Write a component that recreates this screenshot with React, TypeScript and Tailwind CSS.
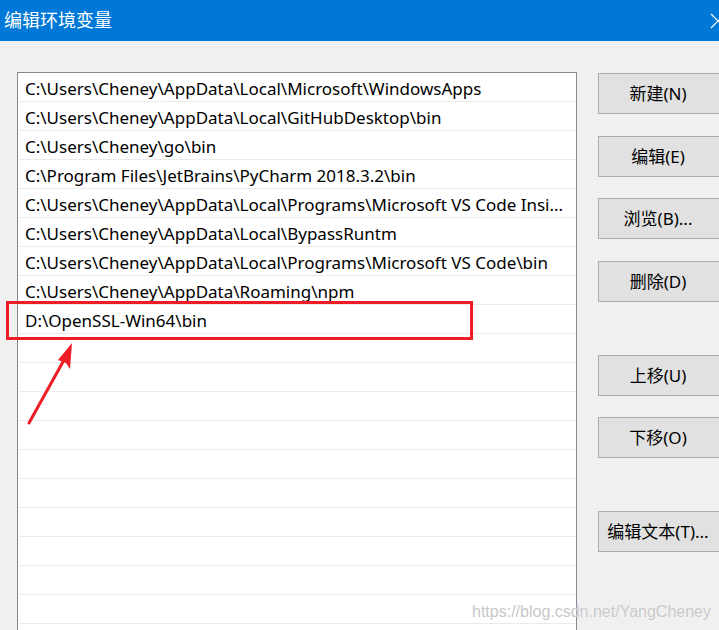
import React from 'react'

const PATHS = [
  'C:\\Users\\Cheney\\AppData\\Local\\Microsoft\\WindowsApps',
  'C:\\Users\\Cheney\\AppData\\Local\\GitHubDesktop\\bin',
  'C:\\Users\\Cheney\\go\\bin',
  'C:\\Program Files\\JetBrains\\PyCharm 2018.3.2\\bin',
  'C:\\Users\\Cheney\\AppData\\Local\\Programs\\Microsoft VS Code Insi...',
  'C:\\Users\\Cheney\\AppData\\Local\\BypassRuntm',
  'C:\\Users\\Cheney\\AppData\\Local\\Programs\\Microsoft VS Code\\bin',
  'C:\\Users\\Cheney\\AppData\\Roaming\\npm',
  'D:\\OpenSSL-Win64\\bin',
]

const BUTTONS = [
  { label: '新建(N)', mt: 'mt-0' },
  { label: '编辑(E)', mt: 'mt-[22px]' },
  { label: '浏览(B)...', mt: 'mt-[21px]' },
  { label: '删除(D)', mt: 'mt-[22px]' },
  { label: '上移(U)', mt: 'mt-[53px]' },
  { label: '下移(O)', mt: 'mt-[21px]' },
  { label: '编辑文本(T)...', mt: 'mt-[53px]' },
]

const FONT = "font-['Noto_Sans','Noto_Sans_CJK_SC',sans-serif]"

export default function App() {
  const rows = [...PATHS, ...Array(12).fill('')]

  return (
    <div className={`relative h-[630px] w-[719px] overflow-hidden bg-[#f0f0f0] ${FONT}`}>
      {/* Title bar */}
      <div className="flex h-[41px] items-center justify-between bg-[#0078d7] pl-[4px] text-white">
        <span className="text-[18px]">编辑环境变量</span>
        <svg className="mr-[-7px] h-[16px] w-[16px]" viewBox="0 0 16 16" fill="none" stroke="white" strokeWidth="1.2">
          <path d="M1 1 L15 15 M15 1 L1 15" />
        </svg>
      </div>

      <div className="flex pl-[17px] pt-[31px]">
        {/* List */}
        <div className="h-[600px] w-[560px] shrink-0 overflow-hidden border-l border-t border-r border-[#828790] bg-white">
          {rows.map((p, i) => (
            <div
              key={i}
              className="ml-[1px] flex h-[29px] items-center overflow-hidden whitespace-nowrap border-b border-[#ebebeb] pl-[6px] pt-[2px] text-[17px] leading-none text-black"
            >
              {p}
            </div>
          ))}
        </div>

        {/* Buttons */}
        <div className="ml-[21px] flex flex-col pt-[1px]">
          {BUTTONS.map((b) => (
            <div
              key={b.label}
              className={`${b.mt} flex h-[41px] w-[122px] items-center border border-[#adadad] bg-[#e1e1e1] pr-[2px] text-[17px] text-black`}
            >
              <span className="w-[120px] text-center">{b.label}</span>
            </div>
          ))}
        </div>
      </div>

      {/* Red highlight box */}
      <div className="absolute left-[6px] top-[301px] h-[39px] w-[467px] border-[3px] border-[#ee1c25]" />

      {/* Arrow */}
      <svg className="absolute left-0 top-0" width="719" height="630" viewBox="0 0 719 630">
        <path d="M29 423 L64 360" stroke="#ee1c25" strokeWidth="3" strokeLinecap="round" />
        <path d="M72 343 L70 369 L66 363 L58 360 Z" fill="#ee1c25" />
      </svg>

      {/* Watermark */}
      <div className="absolute left-[472px] top-[600px] font-['Liberation_Sans',sans-serif] text-[16px] text-[#c8c8c8] [text-shadow:0_0_1px_#ffffff]">
        https://blog.csdn.net/YangCheney
      </div>
    </div>
  )
}
